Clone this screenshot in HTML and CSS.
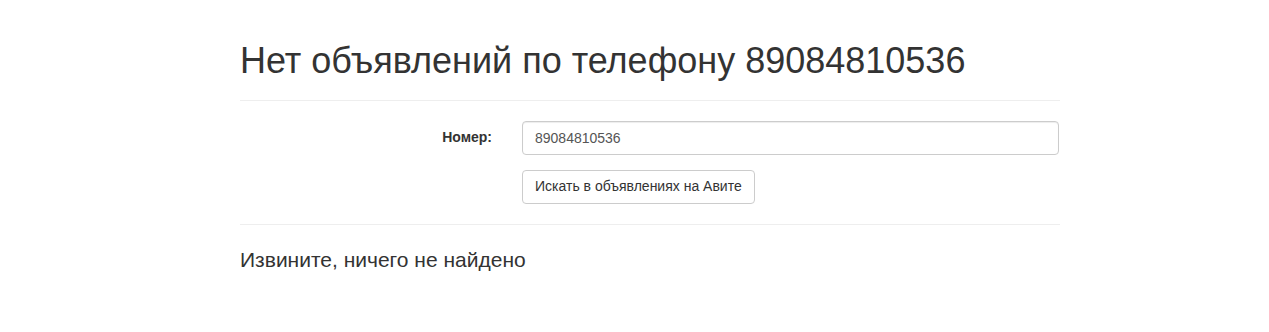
FILE: index.html
```html
<!DOCTYPE html>
<html lang="ru">
<head>
<meta charset="utf-8">
<title>Нет объявлений</title>
<link rel="stylesheet" href="styles.css">
</head>
<body>
<div class="container">
  <div class="page-header">
    <h1>Нет объявлений по телефону 89084810536</h1>
  </div>
  <form class="form-horizontal">
    <div class="form-group">
      <label class="col-label" for="phone">Номер:</label>
      <div class="col-field">
        <input class="form-control" id="phone" type="text" value="89084810536">
      </div>
    </div>
    <div class="form-group">
      <div class="col-label"></div>
      <div class="col-field">
        <button type="button" class="btn">Искать в объявлениях на Авите</button>
      </div>
    </div>
  </form>
  <hr class="sep">
  <p class="lead">Извините, ничего не найдено</p>
</div>
</body>
</html>
```

FILE: styles.css
```css
* { box-sizing: border-box; }
html, body { margin: 0; padding: 0; }
body {
  font-family: "Liberation Sans", Arial, sans-serif;
  font-size: 14px;
  line-height: 1.42857;
  color: #333;
  background: #fff;
}
.container {
  width: 850px;
  margin-left: 225px;
  padding: 0 15px;
}
.page-header {
  margin: 41px 0 20px;
  padding-bottom: 9px;
  border-bottom: 1px solid #eee;
}
.page-header h1 {
  margin: 20px 0 10px;
  font-size: 36px;
  font-weight: 500;
  line-height: 1.1;
}
.form-horizontal { margin: 0 -15px; }
.form-group {
  display: grid;
  grid-template-columns: 282px 1fr;
  margin-bottom: 15px;
}
.col-label {
  padding: 7px 15px 0;
  text-align: right;
  font-weight: bold;
}
.col-field { padding: 0 16px 0 15px; }
.form-control {
  display: block;
  width: 100%;
  height: 34px;
  padding: 6px 12px;
  font: inherit;
  font-size: 14px;
  color: #555;
  background: #fff;
  border: 1px solid #ccc;
  border-radius: 4px;
  box-shadow: inset 0 1px 1px rgba(0,0,0,.075);
}
.btn {
  display: inline-block;
  height: 34px;
  padding: 6px 12px;
  font: inherit;
  font-size: 14px;
  color: #333;
  background: #fff;
  border: 1px solid #ccc;
  border-radius: 4px;
}
.sep {
  margin: 20px 0;
  border: 0;
  border-top: 1px solid #eee;
}
.lead {
  margin: 0 0 20px;
  font-size: 21px;
  font-weight: 300;
  line-height: 1.4;
}
```
